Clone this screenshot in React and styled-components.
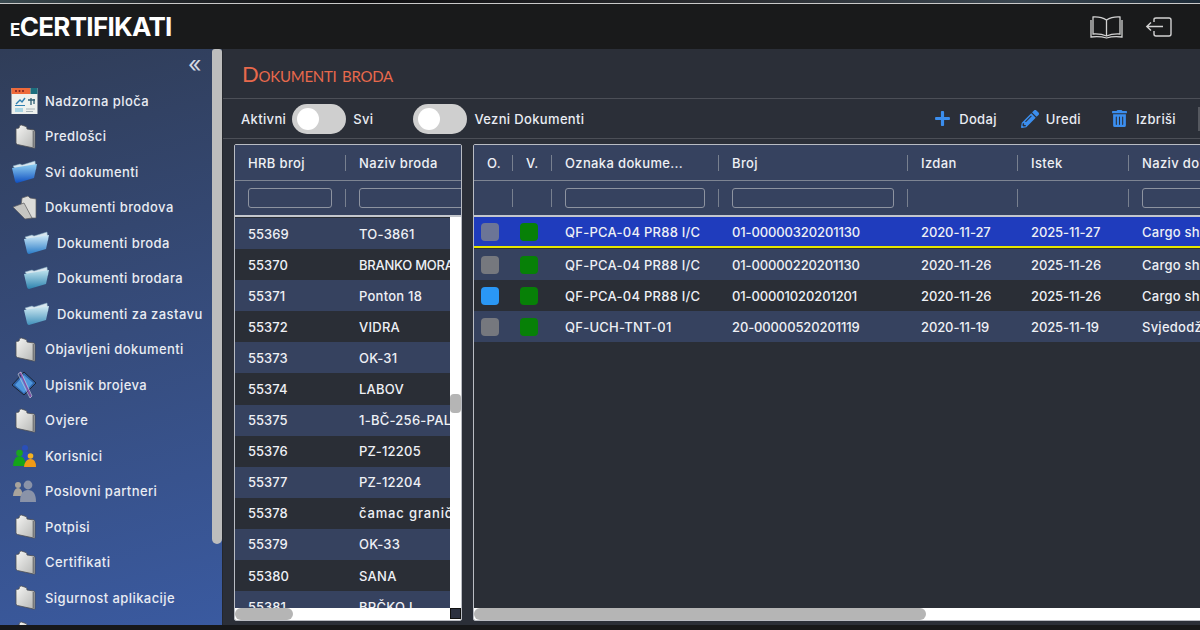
import React from "react";
import styled, { createGlobalStyle } from "styled-components";
import { FaPlus, FaPencilAlt, FaTrashAlt } from "react-icons/fa";

const Global = createGlobalStyle`
  html, body { margin: 0; padding: 0; background: #14161a; }
  #root { width: 1200px; height: 630px; overflow: hidden; }
  * { box-sizing: border-box; }
`;

const FONT = `"Inter", "Open Sans", "Liberation Sans", sans-serif`;

const Page = styled.div`
  width: 1200px; height: 630px; display: flex; flex-direction: column;
  overflow: hidden; font-family: ${FONT}; color: #eef0f5; font-size: 13px;
`;
const Strip = styled.div`
  height: 4px; flex: none;
  background: linear-gradient(90deg, #3a4a50 0, #22262a 14%, #0e0e10 30%, #2a2c30 60%, #3a4650 85%, #1d2b38 100%);
  border-bottom: 1px solid #c9c9c9;
`;
const Header = styled.header`
  height: 45px; flex: none; background: #191a1b; display: flex; align-items: center;
  justify-content: space-between; padding: 0 28px 0 10px;
`;
const Logo = styled.div`
  font-family: ${FONT}; font-weight: 700; font-size: 26px; color: #fff; letter-spacing: -0.7px;
  span { font-size: 17px; }
`;
const HeaderIcons = styled.div` display: flex; align-items: center; gap: 22px; `;
const Body = styled.div` flex: 1; display: flex; min-height: 0; `;
const Footer = styled.div` height: 5px; flex: none; background: #17181a; `;

const Sidebar = styled.nav`
  position: relative; width: 223px; flex: none; overflow: hidden;
  background: linear-gradient(165deg, #303d58 0%, #364c7c 50%, #3a5aa0 100%);
  border-right: 1px solid #24272d; padding-top: 34px;
`;
const SideThumb = styled.div`
  position: absolute; right: 0; top: 0; width: 10px; height: 495px;
  background: #bdbdbd; border-radius: 3px 3px 5px 5px;
`;
const Collapse = styled.div`
  position: absolute; left: 188px; top: 9px; color: #d4d9e3; font-size: 23px; line-height: 13px;
`;
const NavItem = styled.div`
  height: 35.5px; display: flex; align-items: center; gap: 7px;
  padding-left: ${p => (p.$sub ? 23 : 11)}px;
  font-size: 13px; font-weight: 500; color: #e9ecf3; white-space: nowrap; letter-spacing: 0.42px;
`;
const IconSlot = styled.span` width: 27px; height: 28px; flex: none; display: flex; align-items: center; justify-content: center; `;

const Main = styled.main` flex: 1; min-width: 0; background: #2b2f38; display: flex; flex-direction: column; `;
const TitleBar = styled.div`
  height: 50px; flex: none; display: flex; align-items: center; padding-left: 19px;
  border-bottom: 1px solid #4c4f57;
`;
const Title = styled.h1`
  margin: 0; font-family: "Lato", ${FONT}; font-weight: 400; font-size: 22px; color: #e8694c;
  font-variant: small-caps; letter-spacing: -0.25px;
`;
const Toolbar = styled.div`
  height: 40px; flex: none; display: flex; align-items: center; padding-left: 18px;
  border-bottom: 1px solid #4c4f57; font-size: 13px; font-weight: 500; color: #e9ecf3; letter-spacing: 0.35px;
`;
const Toggle = styled.span`
  width: 54px; height: 30px; border-radius: 15px; background: #cfcfcf; flex: none; margin: ${p => p.$m};
  display: flex; align-items: center; padding-left: 5px;
  &::before { content: ""; width: 22px; height: 22px; border-radius: 50%; background: #fff; }
`;
const Action = styled.span`
  display: flex; align-items: center; gap: ${p => p.$gap}px; margin-left: ${p => p.$ml}px;
  svg { color: #3b8eee; flex: none; }
`;
const Spacer = styled.span` flex: 1; `;
const ToolEnd = styled.span` width: 2px; height: 24px; background: #55585f; margin-left: 22px; `;

const Panels = styled.div`
  flex: 1; min-height: 0; display: flex; align-items: stretch; gap: 11px; padding: 5px 0 4px 11px;
`;
const Panel = styled.section`
  border: 1px solid #b9bcc3; border-radius: 2px; display: flex; flex-direction: column; min-width: 0; overflow: hidden;
  ${p => (p.$fill ? "flex: 1; margin-right: -40px;" : "width: 228px; flex: none;")}
  background: #2a2e36;
`;
const HeadRow = styled.div`
  height: 36px; flex: none; display: grid; grid-template-columns: ${p => p.$cols};
  background: #36425f; align-items: center; font-weight: 500; color: #eef0f5; letter-spacing: 0.35px;
  border-bottom: 1px solid #7e8593;
`;
const FilterRow = styled(HeadRow)`
  height: 36px; border-bottom: 2px solid #c4c7cd;
`;
const Cell = styled.div`
  padding-left: 13px; height: 16px; line-height: 16px; white-space: nowrap; overflow: hidden;
  border-right: ${p => (p.$last ? "none" : "1.5px solid #78808f")};
`;
const FilterCell = styled(Cell)` padding-left: 0; height: 18px; overflow: visible; position: relative; `;
const Filter = styled.input`
  position: absolute; left: 13px; top: -1px; height: 20px; width: ${p => p.$w}px;
  background: transparent; border: 1px solid #8d93a0; border-radius: 3px; padding: 0;
`;
const BodyWrap = styled.div` flex: 1; min-height: 0; display: flex; `;
const Rows = styled.div` flex: 1; min-width: 0; overflow: hidden; padding-top: ${p => p.$pt || 0}px; `;
const Row = styled.div`
  height: 31.1px; display: grid; grid-template-columns: ${p => p.$cols}; align-items: center;
  background: ${p => (p.$sel ? "#1f3cbd" : p.$odd ? "#36425f" : "#2a2e36")};
  ${p => p.$sel && "border-bottom: 2px solid #e6e600; height: 31px; margin-bottom: 1px;"}
`;
const Text = styled.div`
  padding-left: 13px; white-space: nowrap; overflow: hidden; color: #eef0f5; font-weight: 500;
  letter-spacing: ${p => p.$ls ?? 0.25}px;
`;
const Square = styled.span`
  display: block; width: 18px; height: 18px; border-radius: 4px; background: ${p => p.$c}; margin-left: ${p => p.$ml}px;
`;
const VTrack = styled.div` position: relative; width: 11px; flex: none; background: #fff; `;
const VThumb = styled.div`
  position: absolute; left: 0; top: 177px; width: 11px; height: 19px; background: #b5b5b5; border-radius: 4px;
`;
const HTrack = styled.div`
  height: 12px; flex: none; background: #fff; display: flex; align-items: stretch; position: relative;
`;
const HThumb = styled.div`
  height: 12px; width: ${p => p.$w}px; background: #b5b5b5; border-radius: 6px; flex: none;
`;
const Corner = styled.div`
  position: absolute; right: 0; top: 0; width: 11px; height: 11px; background: #2c3140; border: 1px solid #111;
`;

/* drawings */
const Box = () => (
  <svg width="24" height="25" viewBox="0 0 24 25">
    <defs>
      <linearGradient id="bx" x1="0" y1="0" x2="1" y2="1">
        <stop offset="0" stopColor="#f6f6f4" /><stop offset="1" stopColor="#b4b5b3" />
      </linearGradient>
    </defs>
    <path d="M6 4 L6.5 2 Q7 1 8.5 1 L13 2.5 Q14 3 14 5 L21 6 Q22 6.5 22 8 L22 23.5 Q22 24.5 20.5 24 L4.5 20.5 Q3 20 3 18.5 L3 5.5 Q3 4 6 4Z" fill="url(#bx)" stroke="#4c4e52" strokeWidth=".8" />
    <path d="M20.4 7 L20.4 23.4" stroke="#77787a" strokeWidth="1.6" />
  </svg>
);
const Folder = ({ a = "#cfeaf5", b = "#1f6fb8", id }) => (
  <svg width="27" height="24" viewBox="0 0 27 24">
    <defs>
      <linearGradient id={id} x1="0" y1="0" x2="0" y2="1">
        <stop offset="0" stopColor={a} /><stop offset="1" stopColor={b} />
      </linearGradient>
    </defs>
    <path d="M2 6 L9 4 L11 5 L24 1 L25 9 L8 14Z" fill="#d8e6ee" stroke="#7da4bd" strokeWidth=".5" />
    <path d="M1 8 L26 4 L23 18 L6 23 Q4.5 23 4 21Z" fill={`url(#${id})`} />
  </svg>
);
const OpenBox = () => (
  <svg width="27" height="26" viewBox="0 0 27 26">
    <path d="M11 4 L17 2 L19 4 L25 5 L25 24 L18 24 L10 12Z" fill="#dcdcd9" stroke="#5b5c5e" strokeWidth=".7" />
    <path d="M2 13 L13 9 L21 24 L14 25 Z" fill="#c5c5c2" stroke="#5b5c5e" strokeWidth=".7" />
  </svg>
);
const Dash = () => (
  <svg width="27" height="28" viewBox="0 0 27 28">
    <rect x="0.5" y="1" width="26" height="26" fill="#eef1ee" />
    <rect x="0.5" y="1" width="19" height="6" fill="#ef6a3a" />
    <rect x="19.5" y="1" width="7" height="6" fill="#1b6f7f" />
    <circle cx="5" cy="4" r="1" fill="#7a1f1f" /><circle cx="8.5" cy="4" r="1" fill="#7a1f1f" /><circle cx="12" cy="4" r="1" fill="#7a1f1f" />
    <path d="M5 17 L9 13 L11 15 L14 11" stroke="#2f7fb0" strokeWidth="1.4" fill="none" />
    <path d="M4 18.5 H14" stroke="#2f7fb0" strokeWidth="1" />
    <path d="M17 13 H24 M20 11 V18 M23 12 V17" stroke="#2f5f74" strokeWidth="1.3" />
    <rect x="4" y="21" width="8" height="4" fill="#a9d5e4" />
    <path d="M15 22 H24 M15 24.5 H22" stroke="#a7b4b8" strokeWidth="1" />
  </svg>
);
const BookBlue = () => (
  <svg width="27" height="27" viewBox="0 0 27 27">
    <path d="M1 14 L13 1 L25 12 L13 24Z" fill="#2f63a8" stroke="#1c2433" strokeWidth="1" />
    <path d="M4 14 L13 4 L22 12 L13 22Z" fill="#4f97dd" />
    <path d="M9 1 L20 26" stroke="#8a4ea8" strokeWidth="1.6" />
    <path d="M7 3 L10 1 L21 25 L19 27Z" fill="none" stroke="#c7c9d8" strokeWidth=".7" />
  </svg>
);
const Users = () => (
  <svg width="26" height="24" viewBox="0 0 26 24">
    <circle cx="13" cy="4" r="3" fill="#2a4fb8" /><path d="M8 16 Q9 7 13 7 Q18 7 18 16Z" fill="#2a4fb8" />
    <circle cx="7.5" cy="9" r="3.3" fill="#1aa51f" /><path d="M1 22 Q2 12 7.5 12 Q13 12 14 22Z" fill="#14a51a" />
    <circle cx="18.5" cy="12" r="2.8" fill="#f5b21f" /><path d="M12 23 Q13 15 18.5 15 Q24 15 24 23Z" fill="#f09a16" />
  </svg>
);
const Partners = () => (
  <svg width="26" height="24" viewBox="0 0 26 24">
    <circle cx="6" cy="6" r="3" fill="#a9a49c" /><path d="M1 17 Q2 9 6 9 Q10 9 11 17Z" fill="#a9a49c" />
    <circle cx="16" cy="6" r="4.4" fill="#8a93a8" /><path d="M8 23 Q8 11 16 11 Q24 11 24 23Z" fill="#8a93a8" />
  </svg>
);
const BookIcon = () => (
  <svg width="33" height="24" viewBox="0 0 33 24" fill="none" stroke="#d2d2d2" strokeWidth="1.3">
    <path d="M16.5 5 Q11 1.5 3 2 V19 Q11 18.5 16.5 21 Q22 18.5 30 19 V2 Q22 1.5 16.5 5Z" />
    <path d="M16.5 5 V21" />
    <path d="M1 5 V22 Q10 21 16.5 23 Q23 21 32 22 V5" />
  </svg>
);
const ExitIcon = () => (
  <svg width="27" height="22" viewBox="0 0 27 22" fill="none" stroke="#d2d2d2" strokeWidth="1.4">
    <path d="M9 6 V3.5 Q9 2 11 2 H24 Q26 2 26 4 V18 Q26 20 24 20 H11 Q9 20 9 18 V15" />
    <path d="M18 10.5 H2 M6 6.5 L1.8 10.5 L6 14.5" />
  </svg>
);

const nav = [
  { t: "Nadzorna ploča", i: <Dash /> },
  { t: "Predlošci", i: <Box /> },
  { t: "Svi dokumenti", i: <Folder id="f1" a="#8fd0f2" b="#0f4fc0" /> },
  { t: "Dokumenti brodova", i: <OpenBox /> },
  { t: "Dokumenti broda", sub: 1, i: <Folder id="f2" a="#cfeaf7" b="#2a7cc8" /> },
  { t: "Dokumenti brodara", sub: 1, i: <Folder id="f3" a="#bfe3ee" b="#2c82ae" /> },
  { t: "Dokumenti za zastavu", sub: 1, i: <Folder id="f4" a="#d2ebf3" b="#4191bb" /> },
  { t: "Objavljeni dokumenti", i: <Box /> },
  { t: "Upisnik brojeva", i: <BookBlue /> },
  { t: "Ovjere", i: <Box /> },
  { t: "Korisnici", i: <Users /> },
  { t: "Poslovni partneri", i: <Partners /> },
  { t: "Potpisi", i: <Box /> },
  { t: "Certifikati", i: <Box /> },
  { t: "Sigurnost aplikacije", i: <Box /> },
  { t: "", i: <Box /> },
];

const ships = [
  ["55369", "TO-3861"], ["55370", "BRANKO MORA", -0.25], ["55371", "Ponton 18"], ["55372", "VIDRA"],
  ["55373", "OK-31"], ["55374", "LABOV"], ["55375", "1-BČ-256-PAL"], ["55376", "PZ-12205"],
  ["55377", "PZ-12204"], ["55378", "čamac granič", 0.85], ["55379", "OK-33"], ["55380", "SANA"], ["55381", "BRČKO I"],
];

const docs = [
  ["#6c7596", "QF-PCA-04 PR88 I/C", "01-00000320201130", "2020-11-27", "2025-11-27", "Cargo ship"],
  ["#76787e", "QF-PCA-04 PR88 I/C", "01-00000220201130", "2020-11-26", "2025-11-26", "Cargo ship"],
  ["#2a97f5", "QF-PCA-04 PR88 I/C", "01-00001020201201", "2020-11-26", "2025-11-26", "Cargo ship"],
  ["#76787e", "QF-UCH-TNT-01", "20-00000520201119", "2020-11-19", "2025-11-19", "Svjedodžba"],
];

const L = "111px 120px";
const R = "39px 39px 167px 189px 110px 111px 120px";

export default function App() {
  return (
    <Page>
      <Global />
      <Strip />
      <Header>
        <Logo><span>E</span>CERTIFIKATI</Logo>
        <HeaderIcons><BookIcon /><ExitIcon /></HeaderIcons>
      </Header>
      <Body>
        <Sidebar>
          <SideThumb />
          <Collapse>«</Collapse>
          {nav.map((n, i) => (
            <NavItem key={i} $sub={n.sub}><IconSlot>{n.i}</IconSlot>{n.t}</NavItem>
          ))}
        </Sidebar>
        <Main>
          <TitleBar><Title>Dokumenti broda</Title></TitleBar>
          <Toolbar>
            Aktivni<Toggle $m="0 7px 0 6px" />Svi<Toggle $m="0 7px 0 40px" />Vezni Dokumenti
            <Spacer />
            <Action $gap={8}><FaPlus size={17} />Dodaj</Action>
            <Action $gap={7} $ml={24}><FaPencilAlt size={18} />Uredi</Action>
            <Action $gap={8} $ml={30}><FaTrashAlt size={17} />Izbriši</Action>
            <ToolEnd />
          </Toolbar>
          <Panels>
            <Panel>
              <HeadRow $cols={L}>
                <Cell>HRB broj</Cell><Cell $last>Naziv broda</Cell>
              </HeadRow>
              <FilterRow $cols={L}>
                <FilterCell><Filter $w={84} /></FilterCell>
                <FilterCell $last><Filter $w={110} /></FilterCell>
              </FilterRow>
              <BodyWrap>
                <Rows $pt={1}>
                  {ships.map((s, i) => (
                    <Row key={s[0]} $cols={L} $odd={i % 2 === 0}>
                      <Text $ls={0}>{s[0]}</Text><Text $ls={s[2]}>{s[1]}</Text>
                    </Row>
                  ))}
                </Rows>
                <VTrack><VThumb /></VTrack>
              </BodyWrap>
              <HTrack><HThumb $w={58} /><Corner /></HTrack>
            </Panel>
            <Panel $fill>
              <HeadRow $cols={R}>
                <Cell>O.</Cell><Cell>V.</Cell><Cell>Oznaka dokume...</Cell><Cell>Broj</Cell>
                <Cell>Izdan</Cell><Cell>Istek</Cell><Cell $last>Naziv dokumenta</Cell>
              </HeadRow>
              <FilterRow $cols={R}>
                <FilterCell /><FilterCell />
                <FilterCell><Filter $w={140} /></FilterCell>
                <FilterCell><Filter $w={162} /></FilterCell>
                <FilterCell /><FilterCell />
                <FilterCell $last><Filter $w={100} /></FilterCell>
              </FilterRow>
              <BodyWrap>
                <Rows>
                  {docs.map((d, i) => (
                    <Row key={i} $cols={R} $sel={i === 0} $odd={i === 1 || i === 3}>
                      <Square $c={d[0]} $ml={7} />
                      <Square $c="#078007" $ml={7} />
                      <Text>{d[1]}</Text><Text $ls={-0.12}>{d[2]}</Text><Text $ls={-0.1}>{d[3]}</Text><Text $ls={-0.1}>{d[4]}</Text><Text>{d[5]}</Text>
                    </Row>
                  ))}
                </Rows>
              </BodyWrap>
              <HTrack><HThumb $w={452} /></HTrack>
            </Panel>
          </Panels>
        </Main>
      </Body>
      <Footer />
    </Page>
  );
}
